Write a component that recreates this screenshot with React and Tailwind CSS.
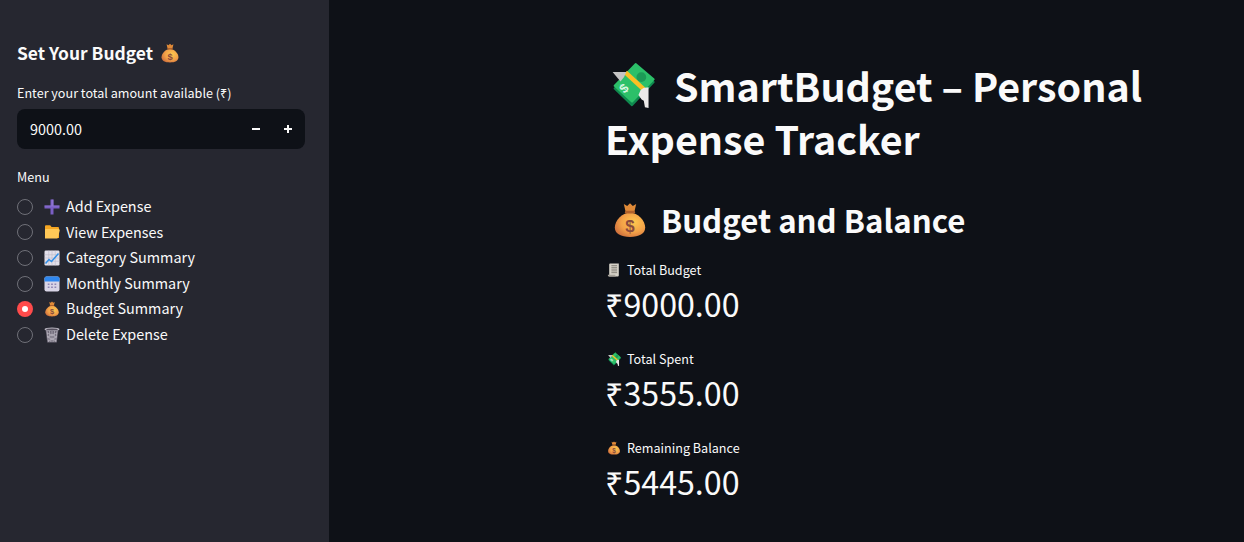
const FONT = "font-['Noto_Sans_CJK_SC','Noto_Sans',sans-serif]";

function MoneyBag({ className }) {
  return (
    <svg viewBox="0 0 32 32" className={className}>
      <defs>
        <radialGradient id="bagG" cx="0.62" cy="0.4" r="0.75">
          <stop offset="0" stopColor="#ffc94f" />
          <stop offset="0.55" stopColor="#f2a048" />
          <stop offset="1" stopColor="#c8663a" />
        </radialGradient>
      </defs>
      <path d="M16 9.500c-7 0-13.500 7-13.500 13.200C2.500 28.500 8 31 16 31s13.500-2.500 13.500-8.300C29.500 16.500 23 9.500 16 9.500z" fill="url(#bagG)" />
      <path d="M10.500 1.800l3 1.700L16 1l2.500 2.500 3-1.700-1.500 6.400c-2.500.8-5.500.8-8 0z" fill="#e08a38" />
      <rect x="11.500" y="7.800" width="9" height="2.400" rx="1.200" fill="#b0622c" />
      <text x="16" y="26.500" textAnchor="middle" fontSize="15" fontWeight="700" fill="#8a4b3c" fontFamily="Liberation Sans, sans-serif">$</text>
    </svg>
  );
}

function MoneyWings({ className }) {
  return (
    <svg viewBox="0 0 32 32" className={className}>
      <path d="M18.500 3.500L31 14 16 30 4 18.500z" fill="#0f8a4f" stroke="#0f8a4f" strokeWidth="1.500" strokeLinejoin="round" />
      <path d="M18.500 1.500L31 12 16 27.500 4 16.500z" fill="#2cc069" stroke="#2cc069" strokeWidth="1.500" strokeLinejoin="round" />
      <circle cx="22.500" cy="10.500" r="3.400" fill="#1c9b56" />
      <path d="M10.500 8.500l2-2.500 13 12-2 2.500z" fill="#fbbf24" />
      <path d="M2.500 7h9.500l-1.500 3.500-2.500 3z" fill="#c4c4c4" />
      <path d="M20.500 23l1.500-3.500 2-1.500 3.500-.5V32l-2.500-.5-.8-4.500-1.500-1z" fill="#ece9e9" />
      <text x="0" y="0" transform="translate(12.500 20.500) rotate(-45)" textAnchor="middle" fontSize="9" fontWeight="700" fill="#d8f6e2" fontFamily="Liberation Sans, sans-serif">$</text>
    </svg>
  );
}

function PlusIcon({ className }) {
  return (
    <svg viewBox="0 0 32 32" className={className}>
      <path d="M13 1h6v12h12v6H19v12h-6V19H1v-6h12z" fill="#7a5fc4" />
      <path d="M15 1h4v12h-4zM1 13h30v2H1z" fill="#9a80dc" opacity="0.6" />
    </svg>
  );
}

function FolderIcon({ className }) {
  return (
    <svg viewBox="0 0 32 32" className={className}>
      <path d="M2 5c0-1.500 1-2.500 2.500-2.500h7c1 0 1.800.5 2.300 1.300L15 6h12.500C29 6 30 7 30 8.500V28H4.500C3 28 2 27 2 25.500z" fill="#f5a623" />
      <path d="M2 12c0-1.200 1-2 2.200-2H29c1.800 0 2.800 1.500 2.400 3l-3.400 14c-.3 1-1.200 2-2.300 2H2z" fill="#ffc857" />
    </svg>
  );
}

function ChartIcon({ className }) {
  return (
    <svg viewBox="0 0 32 32" className={className}>
      <rect x="1" y="1" width="30" height="30" rx="2.500" fill="#e3e0ea" />
      <path d="M1 9.500h30M1 16h30M1 22.500h30M9.500 1v30M16 1v30M22.500 1v30" stroke="#b5b0c2" strokeWidth="1" />
      <path d="M3 27l7-8 5 4L29 7" stroke="#2f8fe8" strokeWidth="3" fill="none" />
    </svg>
  );
}

function CalendarIcon({ className }) {
  return (
    <svg viewBox="0 0 32 32" className={className}>
      <rect x="1" y="1" width="30" height="30" rx="4" fill="#d9d5e6" />
      <path d="M1 11V5c0-2.200 1.800-4 4-4h22c2.200 0 4 1.800 4 4v6z" fill="#2f87ef" />
      <g fill="#8f86b4">
        <rect x="7.500" y="15" width="3.500" height="3" /><rect x="14.200" y="15" width="3.500" height="3" /><rect x="21" y="15" width="3.500" height="3" />
        <rect x="7.500" y="21" width="3.500" height="3" /><rect x="14.200" y="21" width="3.500" height="3" /><rect x="21" y="21" width="3.500" height="3" />
      </g>
    </svg>
  );
}

function TrashIcon({ className }) {
  return (
    <svg viewBox="0 0 32 32" className={className}>
      <path d="M3 4h26l-3.500 27h-19z" fill="#6f6a78" />
      <path d="M6 8l3 22M11 8l1.500 22M16 8v22M21 8l-1.500 22M26 8l-3 22M6 12l20 8M26 12L6 20M7 20l18 8M25 20L8 28" stroke="#cfccd4" strokeWidth="1.100" fill="none" />
      <ellipse cx="16" cy="4.500" rx="15" ry="3.500" fill="#b9b6c0" />
      <ellipse cx="16" cy="5" rx="11.500" ry="1.800" fill="#55505e" />
    </svg>
  );
}

function ReceiptIcon({ className }) {
  return (
    <svg viewBox="0 0 32 32" className={className}>
      <path d="M7 1h20v27c0 1.700-1.300 3-3 3H5V4c0-1.700.9-3 2-3z" fill="#d6d2c8" />
      <path d="M2 27h17v1c0 1.700 1.300 3 3 3H5c-1.700 0-3-1.300-3-3z" fill="#a8a49b" />
      <path d="M10 6h13M10 10h13M10 14h13M10 18h13M10 22h13" stroke="#6c6860" strokeWidth="1.600" />
    </svg>
  );
}

const MENU = [
  ["Add Expense", PlusIcon],
  ["View Expenses", FolderIcon],
  ["Category Summary", ChartIcon],
  ["Monthly Summary", CalendarIcon],
  ["Budget Summary", MoneyBag],
  ["Delete Expense", TrashIcon],
];

const METRICS = [
  ["Total Budget", ReceiptIcon, "₹9000.00"],
  ["Total Spent", MoneyWings, "₹3555.00"],
  ["Remaining Balance", MoneyBag, "₹5445.00"],
];

export default function App() {
  return (
    <div className={`${FONT} flex h-[542px] w-[1244px] overflow-hidden bg-[#0e1117] text-[#fafafa]`}>
      <aside className="flex h-full w-[329px] shrink-0 flex-col bg-[#262730] pl-[17px] pr-[24px] pt-[40px]">
        <h2 className="flex h-[26px] items-center text-[17.4px] font-semibold leading-[26px]">
          <span>Set Your Budget</span>
          <MoneyBag className="ml-[7px] h-[20px] w-[20px]" />
        </h2>
        <label className="mt-[17px] h-[20px] text-[12.6px] leading-[20px]">Enter your total amount available (₹)</label>
        <div className="mt-[6px] flex h-[40px] items-center rounded-lg bg-[#0e1117] pl-[13px] pr-[1px] text-[14.4px]">
          <span className="flex-1">9000.00</span>
          <span className="flex h-[40px] w-[32px] items-center justify-center">
            <span className="h-[2px] w-[8px] bg-[#fafafa]" />
          </span>
          <span className="relative flex h-[40px] w-[32px] items-center justify-center">
            <span className="h-[2px] w-[8px] bg-[#fafafa]" />
            <span className="absolute h-[8px] w-[2px] bg-[#fafafa]" />
          </span>
        </div>
        <div className="mt-[18px] h-[20px] text-[12.6px] leading-[20px]">Menu</div>
        <ul className="mt-[7px] flex flex-col">
          {MENU.map(([name, Icon]) => {
            const on = name === "Budget Summary";
            return (
              <li key={name} className="flex h-[25.6px] items-center text-[14.4px] leading-[25.6px]">
                {on ? (
                  <span className="flex h-[16px] w-[16px] items-center justify-center rounded-full bg-[#ff4b4b]">
                    <span className="h-[6px] w-[6px] rounded-full bg-white" />
                  </span>
                ) : (
                  <span className="h-[16px] w-[16px] rounded-full border border-[#6f7078]" />
                )}
                <Icon className="ml-[11px] h-[16px] w-[16px]" />
                <span className="ml-[6px] pb-[2px]">{name}</span>
              </li>
            );
          })}
        </ul>
      </aside>
      <main className="flex-1 pl-[276px] pt-[58px]">
        <h1 className="w-[560px] text-[39.4px] font-bold leading-[53px]">
          <MoneyWings className="mb-[-6px] ml-[4px] mr-[19px] inline-block h-[46px] w-[46px] align-baseline" />
          SmartBudget – Personal Expense Tracker
        </h1>
        <h2 className="mt-[34px] flex h-[44px] items-center text-[31.2px] font-semibold leading-[44px]">
          <MoneyBag className="ml-[7px] mr-[13px] h-[36px] w-[36px]" />
          Budget and Balance
        </h2>
        <div className="mt-[18px] flex flex-col gap-[16px]">
          {METRICS.map(([label, Icon, value]) => (
            <div key={label} className="flex h-[73px] flex-col">
              <div className="flex h-[20px] items-center text-[12.6px] leading-[20px]">
                <Icon className="ml-[2px] mr-[6px] h-[14px] w-[14px]" />
                {label}
              </div>
              <div className="mt-[1px] text-[32.2px] leading-[45px]">{value}</div>
            </div>
          ))}
        </div>
      </main>
    </div>
  );
}
